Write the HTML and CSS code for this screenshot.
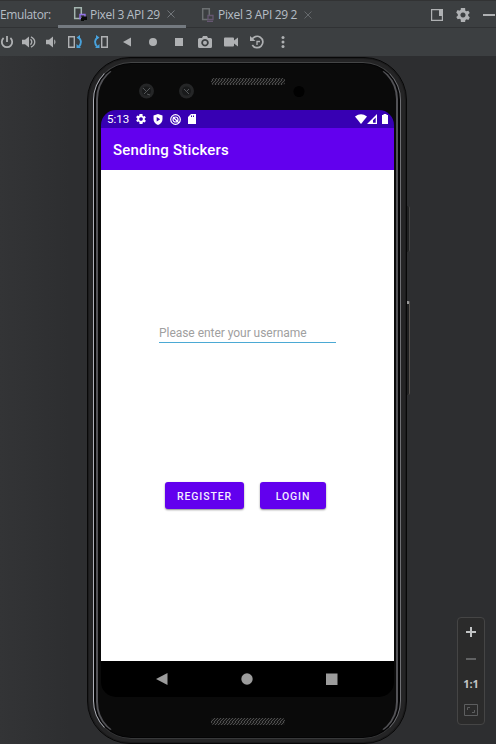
FILE: index.html
```
<!DOCTYPE html>
<html lang="en">
<head>
<meta charset="utf-8">
<title>Emulator</title>
<link rel="stylesheet" href="styles.css">
</head>
<body>
<div class="window">
  <header class="tabs">
    <span class="tabs-title">Emulator:</span>
    <div class="tab tab-active">
      <svg width="14" height="16" viewBox="0 0 14 16"><path d="M7 12.500H1.700V1.700h6.600V8" fill="none" stroke="#a4b5b0" stroke-width="1.500"/><path d="M7 8.500h5v4H7z" fill="none" stroke="#9373e8" stroke-width="1.400"/><path d="M9 10.500h5V14h-3v1H8v-3h1z" fill="#090b09"/></svg>
      <span class="tab-name">Pixel 3 API 29</span>
      <svg class="close" width="8" height="8" viewBox="0 0 8 8"><path d="M.5.5l7 7M7.500.5l-7 7" stroke="#72767a" fill="none"/></svg>
    </div>
    <div class="tab">
      <svg width="14" height="16" viewBox="0 0 14 16"><path d="M7 12.500H1.700V1.700h6.600V8" fill="none" stroke="#6c7072" stroke-width="1.500"/><path d="M7 8.500h5v4H7zM6 14.300h6" fill="none" stroke="#655771" stroke-width="1.300"/></svg>
      <span class="tab-name">Pixel 3 API 29 2</span>
      <svg class="close" width="8" height="8" viewBox="0 0 8 8"><path d="M.5.5l7 7M7.500.5l-7 7" stroke="#65696c" fill="none"/></svg>
    </div>
    <div class="window-actions">
      <svg width="12" height="12" viewBox="0 0 12 12"><path d="M.6.6h10.800v10.800H.6z" fill="none" stroke="#afb1b3" stroke-width="1.200"/><path d="M8 1h3v6H8z" fill="#afb1b3"/></svg>
      <svg width="14" height="14" viewBox="2 2 20 20"><use href="#gear" fill="#afb1b3"/></svg>
      <svg width="12" height="12" viewBox="0 0 12 12"><path d="M0 5h12v2H0z" fill="#afb1b3"/></svg>
    </div>
  </header>
  <nav class="toolbar">
    <span class="tool tool-narrow"><svg width="14" height="14" viewBox="0 0 14 14"><path d="M3.600 3A5.200 5.200 0 1 0 10.400 3M7 1v6" fill="none" stroke="#afb1b3" stroke-width="1.800"/></svg></span>
    <span class="tool tool-narrow"><svg width="14" height="14" viewBox="0 0 14 14"><path d="M0 4.800h3L7 1.500v11L3 9.300H0z" fill="#afb1b3"/><path d="M8.500 4.300q2.600 2.700 0 5.400M9 1.800c5 2.600 5 7.800 0 10.400" fill="none" stroke="#afb1b3" stroke-width="1.300"/></svg></span>
    <span class="tool tool-narrow"><svg width="10" height="14" viewBox="0 0 10 14"><path d="M0 4.800h3L7 1.500v11L3 9.300H0z" fill="#afb1b3"/><path d="M8.200 4.300q2.600 2.700 0 5.400z" fill="#afb1b3"/></svg></span>
    <span class="tool"><svg width="14" height="14" viewBox="0 0 14 14"><path d="M.700 1.700h5.600v10.600H.700z" fill="none" stroke="#afb1b3" stroke-width="1.400"/><path d="M10 2.500c3.500 1.500 3.800 6 1 9" fill="none" stroke="#48a2dc" stroke-width="1.900"/><path d="M12 0v5L8.500 2.500zM8.500 9l4.500 4H8.500z" fill="#48a2dc"/></svg></span>
    <span class="tool"><svg width="14" height="14" viewBox="0 0 14 14"><path d="M7.700 1.700h5.600v10.600H7.700z" fill="none" stroke="#afb1b3" stroke-width="1.400"/><path d="M4 2.500c-3.500 1.500-3.800 6-1 9" fill="none" stroke="#48a2dc" stroke-width="1.900"/><path d="M2 0v5L5.500 2.500zM5.500 9L1 13h4.500z" fill="#48a2dc"/></svg></span>
    <span class="tool"><svg width="8" height="10" viewBox="0 0 8 10"><path d="M0 5l8-4.500v9z" fill="#afb1b3"/></svg></span>
    <span class="tool"><svg width="8" height="8" viewBox="0 0 8 8"><circle cx="4" cy="4" r="4" fill="#afb1b3"/></svg></span>
    <span class="tool"><svg width="8" height="8" viewBox="0 0 8 8"><path d="M0 0h8v8H0z" fill="#afb1b3"/></svg></span>
    <span class="tool"><svg width="14" height="12" viewBox="0 0 14 12"><path fill-rule="evenodd" d="M4 2l1-2h4l1 2h2.500Q14 2 14 3.500v7q0 1.500-1.500 1.500h-11Q0 12 0 10.500v-7Q0 2 1.500 2zM7 3a3.700 3.700 0 1 0 .01 0z" fill="#afb1b3"/><circle cx="7" cy="6.700" r="2" fill="#afb1b3"/></svg></span>
    <span class="tool"><svg width="14" height="10" viewBox="0 0 14 10"><path d="M1 .5h8q1 0 1 1v2L14 .5v9L10 6.500v2q0 1-1 1H1q-1 0-1-1v-7q0-1 1-1z" fill="#afb1b3"/></svg></span>
    <span class="tool"><svg width="14" height="14" viewBox="0 0 14 14"><path d="M1.800 5A5.700 5.700 0 1 1 2.300 10" fill="none" stroke="#afb1b3" stroke-width="1.700"/><path d="M0 1v5h5.500z" fill="#afb1b3"/><path d="M7 10V6.500h3" fill="none" stroke="#afb1b3" stroke-width="1.300"/></svg></span>
    <span class="tool"><svg width="4" height="12" viewBox="0 0 4 12"><g fill="#afb1b3"><circle cx="2" cy="1.500" r="1.500"/><circle cx="2" cy="6" r="1.500"/><circle cx="2" cy="10.500" r="1.500"/></g></svg></span>
  </nav>
  <main class="stage">
    <div class="phone">
      <div class="rim">
        <div class="face">
          <div class="phone-top">
            <svg width="293" height="47" viewBox="0 0 293 47">
              <defs><pattern id="mesh" width="3" height="4" patternUnits="userSpaceOnUse"><path d="M0 0h1v1H0zM2 1h1v1H2zM1 2h1v1H1zM0 3h1v1H0z" fill="#4d4d4d"/></pattern></defs>
              <rect x="110" y="14" width="74" height="7" rx="3" fill="#161616"/><rect x="110" y="14" width="74" height="7" rx="3" fill="url(#mesh)"/>
              <circle cx="45.500" cy="27" r="7.500" fill="#252627"/><circle cx="45.500" cy="27" r="4.500" fill="#191a1b"/><path d="M42 24l3 3M49 24l-6 6M46 30l3 1" stroke="#55585a"/>
              <circle cx="85.500" cy="27" r="7.500" fill="#252627"/><circle cx="85.500" cy="27" r="4.500" fill="#191a1b"/><path d="M83 25l5 5M88 25l-3 3" stroke="#55585a"/>
              <circle cx="198" cy="27.500" r="5.500" fill="#010101"/>
            </svg>
          </div>
          <div class="screen">
            <div class="status">
              <span class="clock">5:13</span>
              <svg width="10" height="10" viewBox="2 2 20 20"><path id="gear" fill-rule="evenodd" d="M19.400 13a7.500 7.500 0 0 0 0-2l2.200-1.700-2-3.500-2.600 1a7 7 0 0 0-1.700-1L15 2H9l-.4 2.800a7 7 0 0 0-1.700 1l-2.600-1-2 3.500L4.600 11a7.500 7.500 0 0 0 0 2l-2.200 1.700 2 3.500 2.600-1a7 7 0 0 0 1.700 1L9 22h6l.4-2.800a7 7 0 0 0 1.700-1l2.600 1 2-3.500zM12 8.300a3.700 3.700 0 1 1-.01 0z"/></svg>
              <svg width="10" height="11" viewBox="0 0 10 11"><path fill-rule="evenodd" d="M5 0l4.500 1.500V5Q9.500 9 5 11 .5 9 .5 5V1.500zM3.700 3v4.600L7.200 5.300z"/></svg>
              <svg width="11" height="11" viewBox="0 0 11 11"><g fill="none" stroke="#fff" stroke-width="1.200"><circle cx="5.500" cy="5.500" r="4.800"/><circle cx="5.500" cy="5.500" r="2.500"/><path d="M3 3l6 6"/></g></svg>
              <svg width="8" height="10" viewBox="0 0 8 10"><path fill-rule="evenodd" d="M3 0h5v10H0V3zM3 1.500V3h1V1.500zM5 1.500V3h1V1.500z"/></svg>
              <div class="signals">
                <svg width="12" height="10" viewBox="0 0 12 10"><path d="M0 2.500Q6-2 12 2.500L6 10z"/></svg>
                <svg width="10" height="10" viewBox="0 0 10 10"><path fill-rule="evenodd" d="M10 0v10H0zM8.700 3.500L6 6.200V8.700h2.700z"/></svg>
                <svg class="battery" width="6" height="10" viewBox="0 0 6 10"><path d="M1.500 0h3v1H6v9H0V1h1.500z"/></svg>
              </div>
            </div>
            <div class="appbar">Sending Stickers</div>
            <div class="content">
              <div class="username">Please enter your username</div>
              <div class="buttons"><div class="button register">REGISTER</div><div class="button login">LOGIN</div></div>
            </div>
            <div class="navbar">
              <svg width="12" height="14" viewBox="0 0 12 14"><path d="M0 7L11.500 1v12z"/></svg>
              <svg width="12" height="12" viewBox="0 0 12 12"><circle cx="6" cy="6" r="5.700"/></svg>
              <svg width="12" height="12" viewBox="0 0 12 12"><path d="M0 .5h11.500V12H0z"/></svg>
            </div>
          </div>
          <svg class="speaker" width="74" height="7" viewBox="0 0 74 7"><rect width="74" height="7" rx="3" fill="#151515"/><rect width="74" height="7" rx="3" fill="url(#mesh)"/></svg>
        </div>
      </div>
      <div class="side-key power"></div>
      <div class="side-key volume"></div>
    </div>
    <aside class="zoom">
      <svg width="10" height="10" viewBox="0 0 10 10"><path d="M4 0h2v4h4v2H6v4H4V6H0V4h4z" fill="#c2c4c5"/></svg>
      <svg class="minus" width="10" height="2" viewBox="0 0 10 2"><path d="M0 0h10v2H0z" fill="#606162"/></svg>
      <span class="ratio">1:1</span>
      <svg width="14" height="12" viewBox="0 0 14 12"><path d="M.5.5h13v11H.5z" fill="none" stroke="#5d5e5f"/><path d="M3.500 6V3.500H6M8 8.500h2.500V6" fill="none" stroke="#5d5e5f"/></svg>
    </aside>
  </main>
</div>
</body>
</html>
```
FILE: styles.css
```
* { box-sizing: border-box; }
body { margin: 0; background: #2d2e30; }
svg { display: block; flex: none; }
.window { width: 496px; height: 744px; overflow: hidden; display: flex; flex-direction: column; }

.tabs {
  height: 28px; flex: none; display: flex; align-items: stretch;
  background: #3c3f41; border-top: 1px solid #323334;
  box-shadow: inset 0 -1px #303234;
  font: 12px/27px "Open Sans", sans-serif; color: #b5bdc5;
}
.tabs-title { width: 58px; letter-spacing: -.4px; }
.tab { width: 128px; display: flex; align-items: center; padding-left: 15px; }
.tab svg:first-child { margin-right: 3px; }
.tab + .tab { width: 140px; }
.tab-active { border-bottom: 3px solid #747a80; }
.tab-active > * { position: relative; top: 1px; }
.tab-name { white-space: nowrap; letter-spacing: -.33px; }
.close { margin-left: 7px; }
.window-actions { margin-left: auto; display: flex; align-items: center; gap: 13px; width: 65px; }

.toolbar { height: 28px; flex: none; display: flex; background: #3c3f41; }
.tool { width: 26px; flex: none; display: flex; align-items: center; justify-content: center; }
.tool-narrow { width: 22px; }
.tool-narrow:first-child { margin-left: -4px; }

.stage { height: 688px; display: flex; align-items: flex-start; background: linear-gradient(90deg, #333436, #2d2e30 70px); }
.phone {
  position: relative; width: 320px; height: 687px; margin: 1px 0 0 87px; flex: none;
  padding: 4px 5px; border-radius: 43px; background: #242425;
  border: 1px solid #080808; box-shadow: inset 0 0 0 1px #1b1b1c;
}
.rim {
  height: 677px; border-radius: 38px; padding: 1px 2px; background: #040405;
  border: 1px solid #6e6f73; border-left-color: #aeb0b8; border-top-color: #444546; border-bottom-color: #38393a;
}
.face {
  height: 673px; border-radius: 35px; border: solid #525256; border-width: 1px 2px;
  border-top-color: #0b0b0b; border-bottom-color: #0b0b0b; background: #0a0a0a;
  padding-left: 1px; display: flex; flex-direction: column; align-items: center;
}
.phone-top { height: 45px; overflow: hidden; }
.screen {
  width: 293px; height: 587px; flex: none; border-radius: 15px; overflow: hidden;
  display: flex; flex-direction: column; font-family: Roboto, sans-serif;
}
.phone-top svg { margin-top: -1px; }
.status { height: 18px; display: flex; align-items: center; padding: 0 6px; background: #3700b3; fill: #fff; }
.clock { width: 29px; font-size: 11.500px; line-height: 18px; color: #fff; }
.status > svg { margin-right: 7px; }
.signals { display: flex; align-items: center; margin-left: auto; }
.battery { margin-left: 5px; }
.appbar { height: 42px; padding-left: 12px; background: #6200ee; color: #fff; font-size: 15px; font-weight: 500; line-height: 44px; letter-spacing: .2px; }
.content { height: 491px; padding: 155px 58px 0; background: #fff; }
.username { height: 18px; width: 177px; border-bottom: 1px solid #4ba9d4; color: #a0a0a0; font-size: 12px; line-height: 17px; white-space: nowrap; letter-spacing: -.04px; }
.buttons { display: flex; gap: 16px; margin: 139px 0 0 6px; }
.button { height: 27px; border-radius: 3px; background: #6200ee; color: #f4edff; font-size: 10.500px; font-weight: 500; line-height: 29px; text-align: center; letter-spacing: .9px; box-shadow: 0 1px 2px rgba(0,0,0,.45); }
.register { width: 79px; }
.login { width: 66px; }
.navbar { height: 36px; display: flex; align-items: center; justify-content: space-between; padding: 0 56px 0 55px; background: #000; fill: #9c9c9c; }
.speaker { margin-top: 21px; }
.side-key { position: absolute; right: -4px; width: 3px; border-right: 1px solid #454545; background: #202122; border-radius: 0 2px 2px 0; }
.power { top: 148px; height: 46px; }
.volume { top: 243px; height: 94px; border-top: 3px solid #9a9a9a; border-right-color: #57534f; }

.zoom {
  width: 28px; height: 108px; margin: 561px 0 0 50px; flex: none; padding: 9px 0 8px;
  display: flex; flex-direction: column; align-items: center; justify-content: space-between;
  border: 1px solid #454545; border-radius: 4px; background: #2b2b2b;
}
.minus { margin-top: 2px; }
.ratio { font: bold 11px/12px "Open Sans", sans-serif; color: #c2c4c5; margin-bottom: -5px; }
```
